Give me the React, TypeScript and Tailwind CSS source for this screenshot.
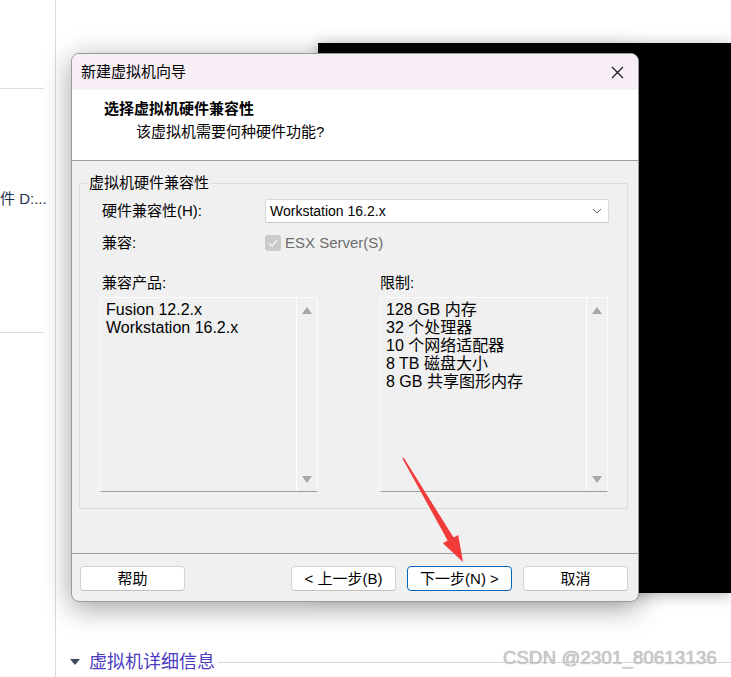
import React from "react";

const FONT = "font-['Liberation_Sans','Noto_Sans_CJK_SC',sans-serif]";

function ScrollArrow({ up }: { up?: boolean }) {
  return (
    <svg width="10" height="7" viewBox="0 0 10 7" className="block">
      <polygon points={up ? "5,0 10,7 0,7" : "0,0 10,0 5,7"} fill="#a6a6a6" />
    </svg>
  );
}

function ListBox({ items, width }: { items: string[]; width: string }) {
  return (
    <div className={`${width} h-[195px] flex border border-[#fbfbfb] border-b-[#9c9c9c] bg-[#f0f0f0]`}>
      <div className="flex-1 pl-[5px] pt-[3px] leading-[18px]">
        {items.map(it => (
          <div key={it} className="whitespace-nowrap">{it}</div>
        ))}
      </div>
      <div className="w-[21px] border-l border-white flex flex-col items-center justify-between pt-[9px] pb-[8px]">
        <ScrollArrow up />
        <ScrollArrow />
      </div>
    </div>
  );
}

function Button({ label, primary }: { label: string; primary?: boolean }) {
  return (
    <button
      type="button"
      className={`w-[105px] h-[25px] rounded-[4px] bg-white text-[15px] leading-[20px] text-black border ${
        primary ? "border-[#0067c0]" : "border-[#d3d3d3] border-b-[#c2c2c2]"
      }`}
    >
      {label}
    </button>
  );
}

function Dialog() {
  return (
    <div className="absolute left-[71px] top-[53px] w-[568px] h-[549px] rounded-[8px] border border-[#9a9a9a] overflow-hidden flex flex-col bg-[#f0f0f0] shadow-[0_6px_28px_rgba(0,0,0,0.38)]">
      {/* title bar */}
      <div className="h-[36px] shrink-0 bg-[#f7eef6] flex items-center justify-between pl-[9px] pr-[14px]">
        <span className="text-[15px] leading-[20px]">新建虚拟机向导</span>
        <svg width="13" height="13" viewBox="0 0 13 13">
          <path d="M1 1 L12 12 M12 1 L1 12" stroke="#1a1a1a" strokeWidth="1.2" />
        </svg>
      </div>

      {/* header */}
      <div className="h-[71px] shrink-0 bg-white border-b border-[#a0a0a0] pt-[9px]">
        <div className="pl-[32px] text-[15px] leading-[20px] font-bold">选择虚拟机硬件兼容性</div>
        <div className="pl-[64px] mt-[3px] text-[15px] leading-[20px]">该虚拟机需要何种硬件功能?</div>
      </div>

      {/* body */}
      <div className="flex-1 pt-[12px]">
        <fieldset className="ml-[7px] mr-[10px] border border-[#dcdcdc] pb-[16px]">
          <legend className="ml-[7px] px-[2px] text-[15px] leading-[20px]">虚拟机硬件兼容性</legend>

          <div className="mt-[6px] h-[24px] flex items-center">
            <span className="w-[185px] pl-[22px] text-[15px] leading-[20px]">硬件兼容性(H):</span>
            <div className="w-[344px] h-[24px] bg-white border border-[#d9d9d9] border-b-[#c4c4c4] rounded-[2px] flex items-center justify-between pl-[4px] pr-[6px]">
              <span className="text-[14px] leading-[20px]">Workstation 16.2.x</span>
              <svg width="10" height="6" viewBox="0 0 10 6">
                <polyline points="1,1 5,5 9,1" fill="none" stroke="#606060" strokeWidth="1" />
              </svg>
            </div>
          </div>

          <div className="mt-[8px] h-[24px] flex items-center">
            <span className="w-[185px] pl-[22px] text-[15px] leading-[20px]">兼容:</span>
            <div className="w-[16px] h-[16px] rounded-[3px] bg-[#cbcbcb] flex items-center justify-center">
              <svg width="10" height="8" viewBox="0 0 10 8">
                <polyline points="1,4 4,7 9,1" fill="none" stroke="#f4f4f4" strokeWidth="1.3" />
              </svg>
            </div>
            <span className="ml-[4px] text-[15px] leading-[20px] text-[#6d6d6d]">ESX Server(S)</span>
          </div>

          <div className="mt-[18px] flex">
            <div className="ml-[20px] w-[218px]">
              <div className="h-[20px] pl-[2px] text-[15px] leading-[20px]">兼容产品:</div>
              <div className="mt-[4px]">
                <ListBox width="w-[218px]" items={["Fusion 12.2.x", "Workstation 16.2.x"]} />
              </div>
            </div>
            <div className="ml-[62px] w-[228px]">
              <div className="h-[20px] text-[15px] leading-[20px]">限制:</div>
              <div className="mt-[4px]">
                <ListBox
                  width="w-[228px]"
                  items={["128 GB 内存", "32 个处理器", "10 个网络适配器", "8 TB 磁盘大小", "8 GB 共享图形内存"]}
                />
              </div>
            </div>
          </div>
        </fieldset>
      </div>

      {/* footer */}
      <div className="h-[48px] shrink-0 border-t border-[#a0a0a0] pt-[12px] pl-[8px] pr-[10px] flex justify-between items-start">
        <Button label="帮助" />
        <div className="flex gap-[11px]">
          <Button label="< 上一步(B)" />
          <Button label="下一步(N) >" primary />
          <Button label="取消" />
        </div>
      </div>
    </div>
  );
}

export default function App() {
  return (
    <div className={`relative w-[731px] h-[677px] overflow-hidden bg-white text-black ${FONT}`}>
      <div className="flex h-full">
        <aside className="w-[56px] shrink-0 border-r border-[#d9d9d9]">
          <div className="h-[89px] w-[44px] border-b border-[#dcdcdc]" />
          <div className="h-[244px] w-[44px] border-b border-[#dcdcdc] pt-[100px]">
            <div className="whitespace-nowrap text-[15px] leading-[20px] text-[#1e2f4d]">件 D:...</div>
          </div>
        </aside>
        <main className="flex-1 flex flex-col justify-end pb-[3px]">
          <div className="h-[24px] flex items-center pl-[14px]">
            <svg width="10" height="6" viewBox="0 0 10 6">
              <polygon points="0,0 10,0 5,6" fill="#3d4b5c" />
            </svg>
            <span className="ml-[9px] text-[18px] leading-[24px] text-[#4c3ac2]">虚拟机详细信息</span>
            <div className="ml-[3px] flex-1 h-px bg-[#d6d6d6]" />
          </div>
        </main>
      </div>

      {/* VM screen behind the wizard */}
      <div className="absolute left-[318px] top-[43px] w-[413px] h-[550px] bg-black shadow-[0_2px_14px_rgba(0,0,0,0.3)]" />

      <Dialog />

      {/* annotation arrow */}
      <svg className="absolute left-0 top-0 pointer-events-none" width="731" height="677" viewBox="0 0 731 677">
        <polygon
          points="402.4,458.4 447.6,540.4 442.9,543.2 463,562 458.2,535.0 453.6,537.6 403.6,457.6"
          fill="#f23b3b"
        />
      </svg>

      <div className="absolute left-[503px] top-[647px] text-[18.5px] leading-[22px] tracking-[0.2px] text-[#cdcdcd] [text-shadow:0_0_1px_#8a8a8a] whitespace-nowrap">
        CSDN @2301_80613136
      </div>
    </div>
  );
}
